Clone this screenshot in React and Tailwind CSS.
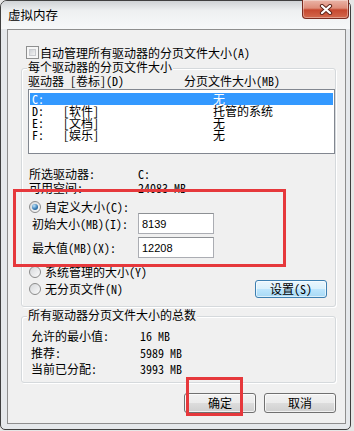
import React from "react";

function Checkbox() {
  return (
    <span className="flex h-[13px] w-[13px] shrink-0 border border-[#8e8f8f] bg-[#f6f6f6] p-[2px]">
      <span className="flex-1 border border-[#c9cbcf] bg-[linear-gradient(135deg,#cfd2d6,#f3f3f3)]" />
    </span>
  );
}

function Radio({ checked }) {
  return (
    <span className="flex h-[12px] w-[12px] shrink-0 items-center justify-center rounded-full border border-[#8b8b8b] bg-[linear-gradient(135deg,#d5d7da,#fbfbfb)]">
      {checked ? (
        <span className="h-[6px] w-[6px] rounded-full bg-[radial-gradient(circle_at_35%_30%,#bfe4fa,#3a7fb8_55%,#17476f)]" />
      ) : null}
    </span>
  );
}

function GroupBox({ label, className, children }) {
  return (
    <div
      className={
        "relative rounded-[3px] border border-[#d5d9dc] shadow-[inset_1px_1px_0_#ffffff,1px_1px_0_#ffffff] " +
        className
      }
    >
      <span className="absolute -top-[8px] left-[5px] bg-[#f0f0f0] px-[1px] leading-[12px]">{label}</span>
      {children}
    </div>
  );
}

function WinButton({ children, hot }) {
  return (
    <div
      className={
        hot
          ? "flex h-[18px] w-[72px] items-center justify-center rounded-[3px] border border-[#3c7fb1] bg-[linear-gradient(#eaf6fd_0%,#d9f0fc_50%,#bee6fd_50%,#a7d9f5_100%)] leading-[12px] shadow-[inset_0_0_0_1px_rgba(255,255,255,0.6)]"
          : "flex h-[20px] w-[72px] items-center justify-center rounded-[3px] border border-[#707070] bg-[linear-gradient(#f2f2f2_0%,#ebebeb_50%,#dddddd_50%,#cfcfcf_100%)] leading-[12px] shadow-[inset_0_0_0_1px_rgba(255,255,255,0.7)]"
      }
    >
      {children}
    </div>
  );
}

function Field({ value }) {
  return (
    <div className="flex h-[21px] w-[76px] items-center border border-[#abadb3] border-t-[#8d9094] bg-white pl-[3px] font-['Liberation_Sans',sans-serif] text-[11px] leading-[12px]">
      {value}
    </div>
  );
}

const drives = [
  { d: "C:", label: "", size: "无", sel: true },
  { d: "D:", label: "[软件]", size: "托管的系统" },
  { d: "E:", label: "[文档]", size: "无" },
  { d: "F:", label: "[娱乐]", size: "无" },
];

export default function App() {
  return (
    <div className="relative h-[431px] w-[354px] overflow-hidden bg-[#e6e6e6] font-['Noto_Sans_Mono_CJK_SC','Noto_Sans_CJK_SC',sans-serif] text-[12px] leading-[12px] text-black">
      <div className="flex h-[430px] w-[351px] flex-col rounded-t-[7px] rounded-b-[5px] border border-[#3f3f3f] bg-[#e5e8eb]">
        {/* title bar */}
        <div className="flex h-[28px] shrink-0 items-start justify-between rounded-t-[6px] bg-[linear-gradient(#cfd2d5_0%,#eef0f1_35%,#f7f8f9_100%)]">
          <span className="ml-[7px] mt-[7px] font-['Noto_Sans_CJK_SC',sans-serif] text-[12.5px] leading-[14px]">虚拟内存</span>
          <div className="-mt-[1px] mr-[1px] flex h-[19px] w-[47px] items-center justify-center rounded-b-[4px] border border-t-0 border-[#7b2c20] bg-[linear-gradient(#eab4a7_0%,#de8d7a_45%,#c6482f_55%,#d3694d_100%)] shadow-[inset_0_0_0_1px_rgba(255,255,255,0.35)]">
            <svg width="14" height="11" viewBox="0 0 14 11">
              <path d="M3 2 L11 9 M11 2 L3 9" stroke="#5e2419" strokeWidth="4.2" strokeLinecap="round" fill="none" />
              <path d="M3 2 L11 9 M11 2 L3 9" stroke="#ffffff" strokeWidth="2.3" strokeLinecap="round" fill="none" />
            </svg>
          </div>
        </div>

        {/* client panel */}
        <div className="mb-[5px] ml-[6px] mr-[4px] flex flex-1 flex-col border border-[#8e8e8e] bg-[#f0f0f0]">
          <div className="ml-[18px] mt-[16px] flex h-[13px] items-center gap-[1px]">
            <Checkbox />
            <span className="leading-[12px]">自动管理所有驱动器的分页文件大小(A)</span>
          </div>

          <GroupBox label="每个驱动器的分页文件大小" className="ml-[13px] mt-[9px] h-[239px] w-[315px] shrink-0">
            <div className="ml-[6px] mt-[6px] flex h-[12px]">
              <span className="w-[156px]">驱动器 [卷标](D)</span>
              <span>分页文件大小(MB)</span>
            </div>
            <div className="ml-[6px] mt-[2px] h-[65px] w-[307px] border border-[#828790] bg-white px-[1px] pt-[3px]">
              {drives.map((r) => (
                <div
                  key={r.d}
                  className={
                    r.sel
                      ? "flex h-[12px] items-center bg-[#3399ff] pl-[2px] text-white"
                      : "flex h-[12px] items-center pl-[2px]"
                  }
                >
                  <span className="w-[31px]">{r.d}</span>
                  <span className="w-[150px]">{r.label}</span>
                  <span>{r.size}</span>
                </div>
              ))}
            </div>

            <div className="mt-[13px] flex h-[14px] items-center pl-[7px]">
              <span className="w-[109px]">所选驱动器:</span>
              <span>C:</span>
            </div>
            <div className="flex h-[14px] items-center pl-[7px]">
              <span className="w-[109px]">可用空间:</span>
              <span>24083 MB</span>
            </div>

            <div className="mt-[6px] flex h-[12px] items-center gap-[4px] pl-[7px]">
              <Radio checked />
              <span>自定义大小(C):</span>
            </div>
            <div className="flex h-[21px] items-center pl-[10px]">
              <span className="w-[106px]">初始大小(MB)(I):</span>
              <Field value="8139" />
            </div>
            <div className="mt-[3px] flex h-[21px] items-center pl-[10px]">
              <span className="w-[106px]">最大值(MB)(X):</span>
              <Field value="12208" />
            </div>
            <div className="mt-[8px] flex h-[12px] items-center gap-[4px] pl-[7px]">
              <Radio />
              <span>系统管理的大小(Y)</span>
            </div>
            <div className="mt-[2px] flex h-[18px] items-center justify-between pl-[7px] pr-[8px]">
              <div className="flex items-center gap-[4px]">
                <Radio />
                <span>无分页文件(N)</span>
              </div>
              <WinButton hot>设置(S)</WinButton>
            </div>
          </GroupBox>

          <GroupBox label="所有驱动器分页文件大小的总数" className="ml-[13px] mt-[9px] h-[67px] w-[315px] shrink-0 pt-[11px]">
            <div className="flex h-[16.5px] items-center pl-[9px]">
              <span className="w-[109px]">允许的最小值:</span>
              <span>16 MB</span>
            </div>
            <div className="flex h-[16.5px] items-center pl-[9px]">
              <span className="w-[109px]">推荐:</span>
              <span>5989 MB</span>
            </div>
            <div className="flex h-[16.5px] items-center pl-[9px]">
              <span className="w-[109px]">当前已分配:</span>
              <span>3993 MB</span>
            </div>
          </GroupBox>

          <div className="mt-[10px] flex justify-end gap-[8px] pr-[9px]">
            <WinButton>确定</WinButton>
            <WinButton>取消</WinButton>
          </div>
        </div>
      </div>

      {/* red annotation boxes */}
      <div className="pointer-events-none absolute left-[13px] top-[189px] h-[78px] w-[273px] border-[3px] border-[#e6383c]" />
      <div className="pointer-events-none absolute left-[186px] top-[377px] h-[39px] w-[57px] border-[3px] border-[#e6383c]" />
    </div>
  );
}
